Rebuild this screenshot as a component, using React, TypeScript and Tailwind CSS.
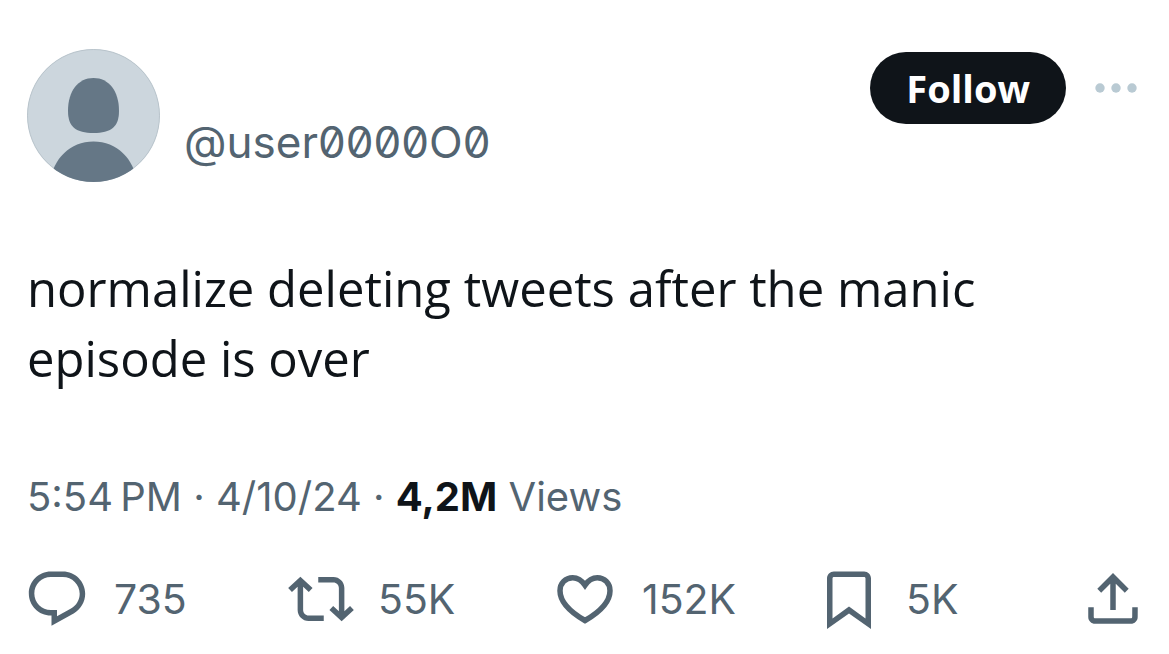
import type { ReactNode } from "react";

// ─── Icons ────────────────────────────────────────────────────────────────────

function Icon({ children }: { children: ReactNode }) {
  return (
    <svg
      viewBox="0 0 24 24"
      className="size-[66px] shrink-0 fill-current"
      aria-hidden="true"
    >
      {children}
    </svg>
  );
}

const ReplyIcon = () => (
  <Icon>
    <path d="M1.751 10c0-4.42 3.584-8 8.005-8h4.366c4.49 0 8.129 3.64 8.129 8.13 0 2.96-1.607 5.68-4.196 7.11l-8.054 4.46v-3.69h-.067c-4.49.1-8.183-3.51-8.183-8.01zm8.005-6c-3.317 0-6.005 2.69-6.005 6 0 3.37 2.77 6.08 6.138 6.01l.351-.01h1.761v2.3l5.087-2.81c1.951-1.08 3.163-3.13 3.163-5.36 0-3.39-2.744-6.13-6.129-6.13H9.756z" />
  </Icon>
);

const RepostIcon = () => (
  <Icon>
    <path d="M4.5 3.88l4.432 4.14-1.364 1.46L5.5 7.55V16c0 1.1.896 2 2 2H13v2H7.5c-2.209 0-4-1.79-4-4V7.55L1.432 9.48.068 8.02 4.5 3.88zM16.5 6H11V4h5.5c2.209 0 4 1.79 4 4v8.45l2.068-1.93 1.364 1.46-4.432 4.14-4.432-4.14 1.364-1.46 2.068 1.93V8c0-1.1-.896-2-2-2z" />
  </Icon>
);

const LikeIcon = () => (
  <svg
    viewBox="0 0 66 66"
    className="size-[66px] shrink-0 fill-none stroke-current"
    strokeWidth="5.5"
    aria-hidden="true"
  >
    <path d="M33 19.2C29.5 14 25 11.7 20.7 11.7 13.5 11.7 8 17.3 8 24.7 8 36.5 20 47 33 54.5 46 47 58 36.5 58 24.7 58 17.3 52.5 11.7 45.3 11.7 41 11.7 36.5 14 33 19.2Z" />
  </svg>
);

const BookmarkIcon = () => (
  <Icon>
    <path d="M4 4.5C4 3.12 5.119 2 6.5 2h11C18.881 2 20 3.12 20 4.5v18.44l-8-5.71-8 5.71V4.5zM6.5 4c-.276 0-.5.22-.5.5v14.56l6-4.29 6 4.29V4.5c0-.28-.224-.5-.5-.5h-11z" />
  </Icon>
);

const ShareIcon = () => (
  <Icon>
    <path d="M12 2.59l5.7 5.7-1.41 1.42L13 6.41V16h-2V6.41l-3.3 3.3-1.41-1.42L12 2.59zM21 15l-.02 3.51c0 1.38-1.12 2.49-2.5 2.49H5.5C4.11 21 3 19.88 3 18.5V15h2v3.5c0 .28.22.5.5.5h12.98c.28 0 .5-.22.5-.5L19 15h2z" />
  </Icon>
);

// ─── Avatar ───────────────────────────────────────────────────────────────────

function Avatar() {
  return (
    <div className="size-[133px] shrink-0 overflow-hidden rounded-full bg-[#ccd6dd]">
      <svg viewBox="0 0 133 133" className="size-full" aria-hidden="true">
        <circle cx="66.5" cy="66.5" r="66" fill="none" stroke="#b9c4cb" />
        <g fill="#657786">
          <path d="M66.5 29C82 29 92 42 92 62 92 78 84 84 66.5 84 49 84 41 78 41 62 41 42 51 29 66.5 29Z" />
          <path d="M23 133C26 110 43 92.5 66.5 92.5 90 92.5 107 110 110 133Z" />
        </g>
      </svg>
    </div>
  );
}

// ─── Tweet ────────────────────────────────────────────────────────────────────

const actions = [
  { label: "Reply", count: "735", icon: <ReplyIcon /> },
  { label: "Repost", count: "55K", icon: <RepostIcon /> },
  { label: "Like", count: "152K", icon: <LikeIcon /> },
  { label: "Bookmark", count: "5K", icon: <BookmarkIcon /> },
];

export default function App() {
  return (
    <main className="min-h-screen bg-white pt-[49px] font-[Inter,sans-serif] text-[#536471]">
      <article>
        <header className="flex items-start px-[27px]">
          <div className="flex items-end gap-6">
            <Avatar />
            <a href="#" className="pb-[10px] text-[44px] leading-[60px] slashed-zero">
              @user0000O0
            </a>
          </div>
          <div className="ml-auto flex items-center gap-[26px] pt-[3px]">
            <button
              type="button"
              className="h-[72px] rounded-full bg-[#0f1419] px-9 font-['Open_Sans',sans-serif] text-[38px] font-bold text-white"
            >
              Follow
            </button>
            <button type="button" aria-label="More">
              <svg viewBox="0 0 50 20" className="h-5 w-[50px] fill-[#b9cad3]" aria-hidden="true">
                <circle cx="8" cy="10" r="4.7" />
                <circle cx="24" cy="10" r="4.7" />
                <circle cx="40" cy="10" r="4.7" />
              </svg>
            </button>
          </div>
        </header>

        <p className="mt-[71px] px-[27px] font-['Open_Sans',sans-serif] text-[49px] leading-[70px] text-[#0f1419]">
          normalize deleting tweets after the manic episode is over
        </p>

        {/* thin space between the time and PM */}
        <p className="mt-[76px] px-[27px] text-[40px] leading-[56px]">
          5:54&#8201;PM · 4/10/24 · <strong className="font-bold text-[#0f1419]">4,2M</strong> Views
        </p>

        <div className="mt-[41px] flex pr-[23px] pl-6">
          {actions.map((action) => (
            <div key={action.label} className="flex-1">
              <button
                type="button"
                aria-label={action.label}
                className="flex items-center gap-6 text-[41px] leading-[56px]"
              >
                {action.icon}
                {action.count}
              </button>
            </div>
          ))}
          <button type="button" aria-label="Share">
            <ShareIcon />
          </button>
        </div>
      </article>
    </main>
  );
}
